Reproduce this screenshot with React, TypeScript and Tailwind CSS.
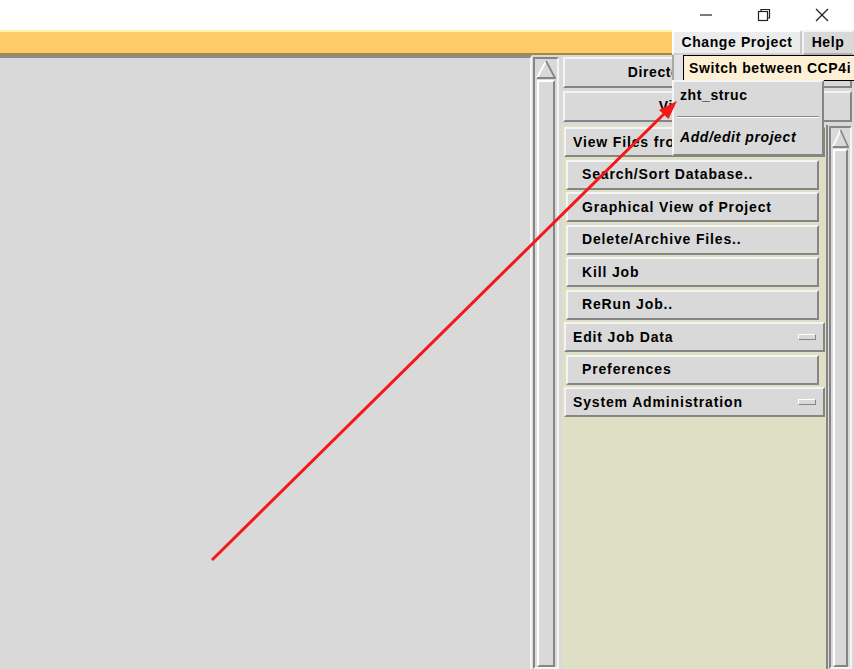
import React from "react";

const raised =
  "border-2 border-t-[#f4f4f4] border-l-[#f4f4f4] border-b-[#858585] border-r-[#858585]";
const sunken =
  "border-2 border-t-[#858585] border-l-[#858585] border-b-[#f4f4f4] border-r-[#f4f4f4]";

function Btn({ label }: { label: string }) {
  return (
    <div
      className={`h-[30px] ml-[4px] w-[253px] shrink-0 bg-[#d9d9d9] ${raised} flex items-center pl-[14px] text-black tracking-[0.85px]`}
    >
      {label}
    </div>
  );
}

function MenuBtn({ label }: { label: string }) {
  return (
    <div
      className={`h-[30px] ml-[2px] w-[261px] shrink-0 bg-[#d9d9d9] ${raised} flex items-center justify-between pl-[7px] pr-[7px] text-black tracking-[0.85px]`}
    >
      <span>{label}</span>
      <span className="w-[18px] h-[6px] bg-[#d9d9d9] border border-t-white border-l-white border-b-[#858585] border-r-[#858585]" />
    </div>
  );
}

function ScrollCol({ className = "" }: { className?: string }) {
  return (
    <div className={`flex flex-col min-w-0 bg-[#d9d9d9] ${sunken} ${className}`}>
      <div className="h-[20px] flex items-start justify-center pt-[1px] px-[1px]">
        <svg className="w-full h-[19px]" viewBox="0 0 22 20" preserveAspectRatio="none">
          <polygon points="11,1 21,19 1,19" fill="#d9d9d9" />
          <polyline points="1,19 11,1" stroke="#ffffff" strokeWidth="2" fill="none" />
          <polyline points="11,1 21,19 1,19" stroke="#858585" strokeWidth="2" fill="none" />
        </svg>
      </div>
      <div className="flex-1 mx-[2px] mt-[1px] bg-[#d9d9d9] border-2 border-t-white border-l-white border-b-[#858585] border-r-[#858585]" />
    </div>
  );
}

export default function App() {
  return (
    <div
      className="relative w-[854px] h-[669px] overflow-hidden bg-white text-[14px] font-bold tracking-[0.6px]"
      style={{ fontFamily: '"Liberation Sans", Arial, sans-serif' }}
    >
      {/* title bar */}
      <div className="h-[30px] bg-white flex items-center justify-end pr-[24px] gap-[42px]">
        <svg width="16" height="16" viewBox="0 0 16 16">
          <line x1="2" y1="8" x2="14" y2="8" stroke="#222" strokeWidth="1.2" />
        </svg>
        <svg width="16" height="16" viewBox="0 0 16 16">
          <rect x="2.5" y="4.5" width="9" height="9" stroke="#222" strokeWidth="1.2" fill="none" />
          <polyline points="5,4.5 5,2.5 13.5,2.5 13.5,11 11.5,11" stroke="#222" strokeWidth="1.2" fill="none" />
        </svg>
        <svg width="16" height="16" viewBox="0 0 16 16">
          <line x1="2" y1="2" x2="14" y2="14" stroke="#222" strokeWidth="1.2" />
          <line x1="14" y1="2" x2="2" y2="14" stroke="#222" strokeWidth="1.2" />
        </svg>
      </div>

      {/* menu row */}
      <div className="h-[25px] flex">
        <div className="flex-1 bg-[#fecb69] border-t-2 border-t-[#fff1a8] border-b-2 border-b-[#a8873f]" />
        <div className="w-[130px] shrink-0 bg-[#ececec] border-2 border-t-white border-l-white border-b-[#d0d0d0] border-r-[#c8c8c8] flex items-center justify-center text-black">
          Change Project
        </div>
        <div className="w-[52px] shrink-0 bg-[#d9d9d9] border-2 border-t-[#f4f4f4] border-l-[#f4f4f4] border-b-[#b0b0b0] border-r-[#d9d9d9] flex items-center justify-center text-black">
          Help
        </div>
      </div>

      {/* main */}
      <div className="h-[614px] flex bg-[#d9d9d9]">
        <div className="w-[532px] shrink-0 bg-[#d9d9d9] border-t-[3px] border-t-[#8c8c8c] border-r-2 border-r-[#f4f4f4]" />
        <div className="w-[30px] shrink-0 flex pt-[2px] pl-[1px] pr-[3px]">
          <ScrollCol className="flex-1" />
        </div>
        <div className="w-[292px] shrink-0 flex flex-col pt-[2px] pr-[2px]">
          <div className={`h-[31px] ml-[1px] bg-[#d9d9d9] ${raised} flex items-center justify-center text-black`}>
            Directories &amp; Projects
          </div>
          <div className={`h-[31px] mt-[3px] ml-[1px] bg-[#d9d9d9] ${raised} flex items-center justify-center text-black`}>
            View Any File
          </div>
          <div className="flex-1 flex mt-[3px] min-h-0">
            <div className="w-[266px] shrink-0 bg-[#dfdfc5] border-r-2 border-r-[#858585] flex flex-col gap-[2.5px] pt-[2px]">
              <MenuBtn label="View Files from Job" />
              <Btn label="Search/Sort Database.." />
              <Btn label="Graphical View of Project" />
              <Btn label="Delete/Archive Files.." />
              <Btn label="Kill Job" />
              <Btn label="ReRun Job.." />
              <MenuBtn label="Edit Job Data" />
              <Btn label="Preferences" />
              <MenuBtn label="System Administration" />
            </div>
            <div className="flex-1 min-w-0 flex pl-[1px] pt-[1px]">
              <ScrollCol className="flex-1" />
            </div>
          </div>
        </div>
      </div>

      {/* posted menu strip */}
      <div className="absolute left-[672px] top-[55px] w-[11px] h-[26px] bg-[#e2e2e2] border-l-2 border-l-[#a8a8a8]" />

      {/* tooltip */}
      <div className="absolute left-[683px] top-[55px] w-[180px] h-[26px] bg-[#fdf0d5] border border-black border-r-0 flex items-center pl-[5px] text-black whitespace-nowrap">
        Switch between CCP4i projects
      </div>

      {/* dropdown menu */}
      <div className={`absolute left-[672px] top-[80px] w-[152px] h-[76px] bg-[#d9d9d9] ${raised} flex flex-col text-black`}>
        <div className="h-[27px] flex items-center pl-[6px]">zht_struc</div>
        <div className="mx-[3px] mt-[7px] border-t border-t-[#8a8a8a] border-b border-b-white" />
        <div className="flex-1 flex items-center pl-[6px] pt-[3px] italic">Add/edit project</div>
      </div>

      {/* red arrow */}
      <svg className="absolute inset-0 pointer-events-none" width="854" height="669" viewBox="0 0 854 669">
        <line x1="212" y1="560" x2="666" y2="112" stroke="#f41818" strokeWidth="3" />
        <polygon points="677,101 668.5,119 659,110" fill="#f41818" />
      </svg>
    </div>
  );
}
